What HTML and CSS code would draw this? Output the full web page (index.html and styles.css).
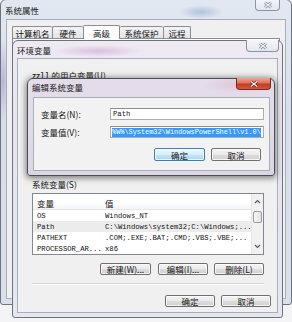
FILE: index.html
```html
<!DOCTYPE html>
<html lang="zh-CN">
<head>
<meta charset="utf-8">
<title>系统属性</title>
<link rel="stylesheet" href="styles.css">
</head>
<body>
<div class="desk">
  <section class="win win-sys">
    <header class="tbar">
      <span class="ttl">系统属性</span>
      <span class="cls cls-off"><svg width="10" height="8" viewBox="0 0 10 8"><path class="xo" d="M2 1.5 L8 6.5 M8 1.5 L2 6.5"/><path class="xi" d="M2 1.5 L8 6.5 M8 1.5 L2 6.5"/></svg></span>
    </header>
    <div class="client sys-client">
      <div class="tabs">
        <span class="tab tw1">计算机名</span>
        <span class="tab tw2">硬件</span>
        <span class="tab tab-sel tw3">高级</span>
        <span class="tab tw4">系统保护</span>
        <span class="tab tab-last tw5">远程</span>
      </div>
      <div class="tabpanel"></div>
    </div>
  </section>

  <section class="win win-env">
    <header class="tbar">
      <span class="ttl">环境变量</span>
      <span class="cls cls-off"><svg width="10" height="8" viewBox="0 0 10 8"><path class="xo" d="M2 1.5 L8 6.5 M8 1.5 L2 6.5"/><path class="xi" d="M2 1.5 L8 6.5 M8 1.5 L2 6.5"/></svg></span>
    </header>
    <div class="client env-client">
      <div class="glabel">zz11 的用户变量(U)</div>
      <div class="ulist"></div>
      <div class="btnrow covered">
        <span class="btn btn-new"></span>
        <span class="btn"></span>
        <span class="btn"></span>
      </div>
      <div class="glabel slabel">系统变量(S)</div>
      <div class="slist">
        <div class="lv">
          <div class="lvh"><span class="c1">变量</span><span class="c2">值</span></div>
          <div class="lvr"><span class="c1">OS</span><span class="c2">Windows_NT</span></div>
          <div class="lvr lvr-sel"><span class="c1">Path</span><span class="c2">C:\Windows\system32;C:\Windows;...</span></div>
          <div class="lvr"><span class="c1">PATHEXT</span><span class="c2">.COM;.EXE;.BAT;.CMD;.VBS;.VBE;...</span></div>
          <div class="lvr"><span class="c1">PROCESSOR_AR...</span><span class="c2">x86</span></div>
        </div>
        <div class="sb">
          <span class="sb-arr"><svg width="7" height="5" viewBox="0 0 7 5"><path d="M1 4 L3.5 1.5 L6 4" class="chev"/></svg></span>
          <span class="sb-thumb"></span>
          <span class="sb-fill"></span>
          <span class="sb-arr"><svg width="7" height="5" viewBox="0 0 7 5"><path d="M1 1 L3.5 3.5 L6 1" class="chev"/></svg></span>
        </div>
      </div>
      <div class="btnrow">
        <span class="btn btn-new">新建(W)...</span>
        <span class="btn">编辑(I)...</span>
        <span class="btn">删除(L)</span>
      </div>
      <div class="sep"></div>
      <div class="btnrow foot">
        <span class="btn">确定</span>
        <span class="btn">取消</span>
      </div>
    </div>
  </section>

  <section class="win win-edit">
    <header class="tbar">
      <span class="ttl">编辑系统变量</span>
      <span class="cls cls-red"><svg width="10" height="8" viewBox="0 0 10 8"><path class="xo" d="M2 1.5 L8 6.5 M8 1.5 L2 6.5"/><path class="xi" d="M2 1.5 L8 6.5 M8 1.5 L2 6.5"/></svg></span>
    </header>
    <div class="client edit-client">
      <div class="frow">
        <span class="flabel">变量名(N):</span>
        <span class="inp">Path</span>
      </div>
      <div class="frow">
        <span class="flabel">变量值(V):</span>
        <span class="inp"><span class="hl">%W%\System32\WindowsPowerShell\v1.0\</span></span>
      </div>
      <div class="ebtns">
        <span class="btn btn-def">确定</span>
        <span class="btn">取消</span>
      </div>
    </div>
  </section>
</div>
</body>
</html>
```

FILE: styles.css
```css
html, body {
  margin: 0;
  padding: 0;
}
body {
  width: 292px;
  height: 322px;
  overflow: hidden;
  background: #f4f4f6;
  font-family: "Noto Sans CJK SC", "Liberation Sans", sans-serif;
  font-size: 8.5px;
  color: #151515;
}
.desk {
  position: relative;
  width: 292px;
  height: 322px;
}

/* windows */
.win {
  position: absolute;
  box-sizing: border-box;
  display: flex;
  flex-direction: column;
  border: 1px solid #6c7482;
  border-radius: 6px 6px 3px 3px;
}
.win-sys {
  left: 0;
  top: -1px;
  width: 292px;
  height: 306px;
  padding: 0 5px 5px 5px;
  background:
    radial-gradient(ellipse 22px 7px at 200px 12px, rgba(120,150,200,.45), rgba(120,150,200,0)),
    radial-gradient(ellipse 6px 40px at 2px 80px, rgba(150,120,190,.45), rgba(150,120,190,0)),
    linear-gradient(#e2e8f1, #d6dee9 40%, #d9e0ea);
}
.win-env {
  left: 12px;
  top: 40px;
  width: 271px;
  height: 278px;
  padding: 0 4px 4px 4px;
  background:
    radial-gradient(ellipse 45px 6px at 85px 10px, rgba(190,140,200,.45), rgba(190,140,200,0)),
    linear-gradient(#efeaf2, #e7e4ee 30%, #e5e6ee);
}
.win-edit {
  left: 27px;
  top: 78px;
  width: 248px;
  height: 98px;
  padding: 0 4px 4px 5px;
  border-color: #4b4e57;
  background:
    radial-gradient(ellipse 40px 8px at 215px 6px, rgba(220,150,170,.35), rgba(220,150,170,0)),
    linear-gradient(#e4dcea, #e2dbe8 40%, #dcd6e4);
  box-shadow: 0 1px 6px 1px rgba(0,0,0,.5);
}

/* title bars */
.tbar {
  display: flex;
  align-items: center;
  flex: none;
  box-sizing: border-box;
}
.win-sys .tbar { height: 19px; }
.win-env .tbar { height: 17px; }
.win-edit .tbar { height: 18px; padding-bottom: 3px; }
.ttl {
  line-height: 12px;
  white-space: nowrap;
  color: #1a1a1a;
}
.win-sys .ttl { margin-left: -1px; }
.win-edit .ttl { margin-left: -1px; }

.cls {
  margin-left: auto;
  align-self: flex-start;
  margin-top: -1px;
  height: 12px;
  box-sizing: border-box;
  display: flex;
  align-items: center;
  justify-content: center;
  border: 1px solid #8b94a3;
  border-top: 0;
  border-radius: 0 0 4px 4px;
}
.cls-off {
  background: linear-gradient(#f4f6f9, #e3e8ef);
}
.win-sys .cls { width: 25px; margin-right: 6px; }
.win-env .cls { width: 33px; margin-right: -1px; }
.win-edit .cls { width: 35px; margin-right: -1px; }
.cls-red {
  border-color: #7a2a1d;
  background: linear-gradient(#eaa797 0%, #dc735b 45%, #c23d22 55%, #cf5a3e 100%);
}
.xo {
  fill: none;
  stroke: #7b8390;
  stroke-width: 2.8;
}
.xi {
  fill: none;
  stroke: #f3f5f8;
  stroke-width: 1.2;
}
.cls-red .xo { stroke: #5c1a10; }
.cls-red .xi { stroke: #ffffff; }

/* client areas */
.client {
  flex: 1;
  min-height: 0;
  box-sizing: border-box;
  border: 1px solid #a5aebb;
  background: #f0f0f0;
  display: flex;
  flex-direction: column;
}

/* system properties tabs */
.sys-client {
  padding: 5px 5px 0 5px;
}
.tabs {
  display: flex;
  align-items: flex-end;
  height: 13px;
  flex: none;
}
.tab {
  height: 12px;
  box-sizing: border-box;
  border: 1px solid #898c95;
  border-bottom: 0;
  border-right: 0;
  border-radius: 2px 2px 0 0;
  background: linear-gradient(#f4f4f4, #e4e4e4);
  display: flex;
  align-items: center;
  justify-content: center;
  line-height: 10px;
  white-space: nowrap;
}
.tab-last { border-right: 1px solid #898c95; }
.tab-sel {
  height: 14px;
  margin-bottom: -1px;
  background: #ffffff;
  border-right: 1px solid #898c95;
  position: relative;
  z-index: 1;
}
.tab-sel + .tab { border-left: 0; }
.tw1 { width: 40px; }
.tw2 { width: 31px; }
.tw3 { width: 37px; }
.tw4 { width: 43px; }
.tw5 { width: 28px; }
.tabpanel {
  flex: 1;
  border: 1px solid #898c95;
  background: #ffffff;
  margin-bottom: 30px;
}

/* environment variables */
.env-client {
  padding: 11px 13px 0 14px;
}
.glabel {
  height: 11px;
  line-height: 11px;
  white-space: nowrap;
  flex: none;
}
.slabel { margin-top: 17px; }
.ulist {
  margin-top: 3px;
  height: 58px;
  flex: none;
  box-sizing: border-box;
  border: 1px solid #828790;
  background: #ffffff;
}
.btnrow {
  display: flex;
  justify-content: flex-end;
  gap: 6px;
  margin-top: 8px;
  flex: none;
}
.btn {
  width: 50px;
  height: 12px;
  box-sizing: border-box;
  border: 1px solid #707070;
  border-radius: 2px;
  background: linear-gradient(#f3f3f3 0%, #ebebeb 50%, #dddddd 51%, #d0d0d0 100%);
  box-shadow: inset 0 0 0 1px rgba(255,255,255,.75);
  display: flex;
  align-items: center;
  justify-content: center;
  line-height: 10px;
  white-space: nowrap;
  color: #151515;
}
.btn-new { width: 51px; margin-right: 1px; }
.sep {
  margin-top: 8px;
  height: 1px;
  background: #d5d5d5;
  border-bottom: 1px solid #ffffff;
  flex: none;
}
.foot {
  margin-top: 10px;
  margin-right: -7px;
}

/* system variable list */
.slist {
  margin-top: 3px;
  height: 62px;
  flex: none;
  box-sizing: border-box;
  border: 1px solid #828790;
  background: #ffffff;
  display: flex;
}
.lv {
  flex: 1;
  min-width: 0;
  overflow: hidden;
}
.lvh {
  height: 16px;
  box-sizing: border-box;
  padding-top: 3px;
  display: flex;
  align-items: center;
  border-bottom: 1px solid #e3e5e8;
  background: linear-gradient(#ffffff 55%, #f3f4f6);
}
.c1 {
  width: 72px;
  padding-left: 4px;
  box-sizing: border-box;
  flex: none;
  white-space: nowrap;
  overflow: hidden;
}
.c2 {
  flex: 1;
  min-width: 0;
  white-space: nowrap;
  overflow: hidden;
}
.lvr {
  height: 11px;
  display: flex;
  align-items: center;
  font-family: "Liberation Mono", monospace;
  font-size: 7.2px;
  color: #111;
}
.lvr-sel { background: #ececec; }
.sb {
  width: 11px;
  flex: none;
  display: flex;
  flex-direction: column;
  align-items: center;
  background: #f1f1f1;
  border-left: 1px solid #e6e6e6;
}
.sb-arr {
  height: 15px;
  display: flex;
  align-items: center;
  justify-content: center;
}
.chev {
  fill: none;
  stroke: #555;
  stroke-width: 1.1;
}
.sb-thumb {
  margin-top: 2px;
  width: 9px;
  height: 12px;
  box-sizing: border-box;
  border: 1px solid #9b9b9b;
  border-radius: 2px;
  background: linear-gradient(90deg, #f7f7f7, #e3e3e3);
}
.sb-fill { flex: 1; }

/* edit dialog */
.edit-client {
  padding: 10px 5px 0 7px;
  border-color: #a8adb8;
  background: #f2f2f2;
}
.frow {
  display: flex;
  align-items: center;
  height: 12px;
  flex: none;
}
.frow + .frow { margin-top: 6px; }
.flabel {
  width: 69px;
  flex: none;
  white-space: nowrap;
  line-height: 11px;
}
.inp {
  flex: 1;
  min-width: 0;
  height: 12px;
  box-sizing: border-box;
  border: 1px solid #abadb3;
  border-top-color: #8c8f94;
  background: #ffffff;
  padding-left: 1px;
  font-family: "Liberation Mono", monospace;
  font-size: 6.9px;
  line-height: 10px;
  white-space: nowrap;
  overflow: hidden;
  display: flex;
  align-items: center;
}
.inp:first-child, .frow:first-child .inp { padding-left: 2px; font-size: 7.2px; }
.hl {
  background: #3399ff;
  color: #ffffff;
  line-height: 9px;
}
.ebtns {
  display: flex;
  justify-content: flex-end;
  gap: 6px;
  margin-top: 10px;
  margin-right: 3px;
  flex: none;
}
.ebtns .btn { height: 13px; }
.ebtns .btn-def {
  width: 51px;
  border-color: #3c7fb1;
  background: linear-gradient(#eaf6fd 0%, #d9f0fc 50%, #bee6fd 51%, #a7d9f5 100%);
}
```
